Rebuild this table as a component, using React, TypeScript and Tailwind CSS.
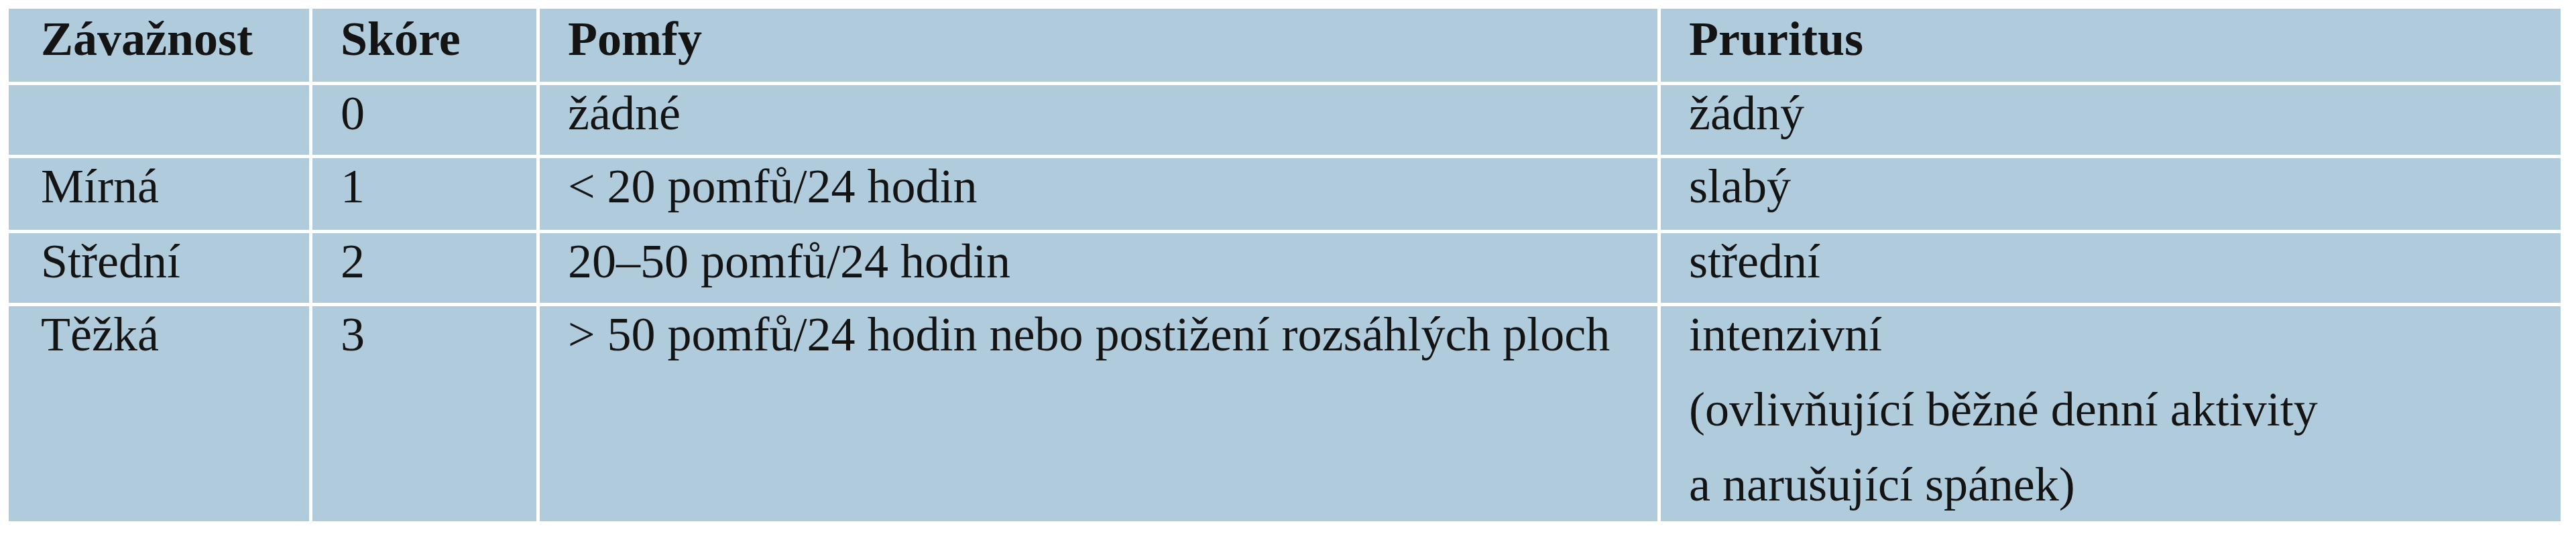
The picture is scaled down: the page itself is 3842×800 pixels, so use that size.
const header = ['Závažnost', 'Skóre', 'Pomfy', 'Pruritus'];

const rows: string[][][] = [
  [[''], ['0'], ['žádné'], ['žádný']],
  [['Mírná'], ['1'], ['< 20 pomfů/24 hodin'], ['slabý']],
  [['Střední'], ['2'], ['20–50 pomfů/24 hodin'], ['střední']],
  [
    ['Těžká'],
    ['3'],
    ['> 50 pomfů/24 hodin nebo postižení rozsáhlých ploch'],
    ['intenzivní', '(ovlivňující běžné denní aktivity', 'a narušující spánek)'],
  ],
];

export default function App() {
  return (
    <div className="w-[3842px] h-[800px] bg-white pt-[13px] pl-[13px]">
      <div
        className="grid grid-cols-[448px_334px_1667px_1342px] grid-rows-[109px_104px_107px_104px_321px] gap-[5px] text-[72px] leading-[72px] text-[#141414]"
        style={{ fontFamily: '"Liberation Serif", "Times New Roman", serif' }}
      >
        {header.map((h, i) => (
          <div
            key={h}
            className={`bg-[#b0cbdc] pt-[9px] font-bold whitespace-nowrap ${i === 0 ? 'pl-[48px]' : 'pl-[42px]'}`}
          >
            {h}
          </div>
        ))}
        {rows.map((row, r) =>
          row.map((cell, c) => (
            <div
              key={`${r}-${c}`}
              className={`bg-[#b0cbdc] pt-[6px] whitespace-nowrap flex flex-col gap-[40px] ${c === 0 ? 'pl-[48px]' : 'pl-[42px]'}`}
            >
              {cell.map((line, k) => (
                <div key={k}>{line}</div>
              ))}
            </div>
          )),
        )}
      </div>
    </div>
  );
}
